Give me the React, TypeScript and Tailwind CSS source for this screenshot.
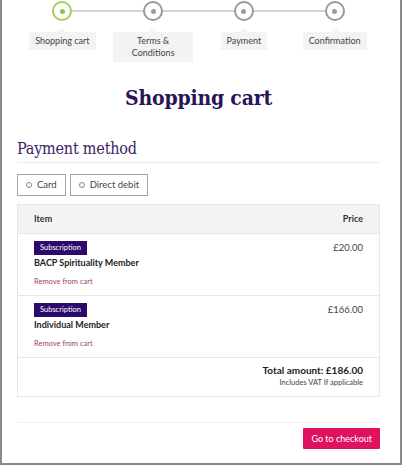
const steps = [
  { label: "Shopping cart", active: true },
  { label: "Terms & Conditions", active: false },
  { label: "Payment", active: false },
  { label: "Confirmation", active: false },
];

const items = [
  { name: "BACP Spirituality Member", price: "£20.00" },
  { name: "Individual Member", price: "£166.00" },
];

function Steps() {
  return (
    <div className="relative grid grid-cols-4 pt-[1px]">
      <div className="absolute left-[45px] right-[45px] top-[10px] h-[2px] bg-[#d4d4d4]" />
      {steps.map((s) => (
        <div key={s.label} className="relative flex flex-col items-center">
          <div
            className={
              s.active
                ? "flex h-[20px] w-[20px] items-center justify-center rounded-full border-2 border-[#a3cf63] bg-white"
                : "flex h-[20px] w-[20px] items-center justify-center rounded-full border-2 border-[#9a9a9a] bg-white"
            }
          >
            <div
              className={
                s.active
                  ? "h-[5px] w-[5px] rounded-full bg-[#8fc04e]"
                  : "h-[5px] w-[5px] rounded-full bg-[#9a9a9a]"
              }
            />
          </div>
          <div className="mt-[7px] h-0 w-0 border-x-[4px] border-b-[4px] border-x-transparent border-b-[#f3f3f3]" />
          <div className="bg-[#f3f3f3] px-[6px] py-[3px] text-center text-[9px] leading-[12px] text-[#444]">
            {s.label === "Terms & Conditions" ? (
              <div className="w-[68px]">Terms &amp;<br />Conditions</div>
            ) : (
              s.label
            )}
          </div>
        </div>
      ))}
    </div>
  );
}

export default function App() {
  return (
    <div className="box-border h-[465px] w-[402px] overflow-hidden border-x-2 border-b-2 border-[#8a8a8a] bg-white font-['Lato','Open_Sans',sans-serif] text-[#333]">
      <div className="pl-[15px] pr-[20px]">
        <Steps />

        <h1 className="mt-[22px] text-center font-['DejaVu_Serif',serif] text-[21px] font-bold leading-[28px] tracking-[-0.2px] text-[#2b1458] font-stretch-condensed">
          Shopping cart
        </h1>

        <h2 className="mt-[26px] border-b border-[#ececec] pb-[2px] font-['DejaVu_Serif',serif] text-[16px] leading-[22px] tracking-[-0.2px] text-[#3a2466] font-stretch-condensed">
          Payment method
        </h2>

        <div className="mt-[11px] flex gap-[4px]">
          {["Card", "Direct debit"].map((m) => (
            <label
              key={m}
              className="flex h-[22px] items-center gap-[5px] border border-[#a5a5a5] px-[8px] text-[9.5px] text-[#444]"
            >
              <span className="h-[6px] w-[6px] rounded-full border border-[#888]" />
              {m}
            </label>
          ))}
        </div>

        <div className="mt-[8px] border border-[#e6e6e6]">
          <div className="flex h-[28px] items-center justify-between bg-[#f3f3f3] px-[16px] text-[9px] font-bold text-[#333]">
            <span>Item</span>
            <span>Price</span>
          </div>
          {items.map((it) => (
            <div
              key={it.name}
              className="flex h-[62px] justify-between border-t border-[#e6e6e6] px-[16px] pt-[7px]"
            >
              <div className="flex flex-col items-start">
                <span className="bg-[#2b0a6b] px-[6px] text-[7.5px] leading-[14px] text-white">
                  Subscription
                </span>
                <span className="mt-[2px] text-[9px] font-bold leading-[12px] text-[#222]">
                  {it.name}
                </span>
                <span className="mt-[8px] text-[7.5px] leading-[10px] text-[#a0406e]">
                  Remove from cart
                </span>
              </div>
              <span className="pt-[1px] text-[9.5px] leading-[12px] text-[#444]">{it.price}</span>
            </div>
          ))}
          <div className="flex h-[39px] flex-col items-end border-t border-[#e6e6e6] px-[16px] pt-[6px]">
            <span className="text-[10px] font-bold leading-[13px] text-[#222]">Total amount: £186.00</span>
            <span className="text-[7.5px] leading-[11px] text-[#444]">Includes VAT If applicable</span>
          </div>
        </div>

        <div className="mt-[25px] border-t border-[#f0f0f0]" />

        <div className="mt-[5px] flex justify-end">
          <button className="h-[21px] rounded-[1px] bg-[#e0115f] px-[8px] text-[9px] text-white">
            Go to checkout
          </button>
        </div>
      </div>
    </div>
  );
}
